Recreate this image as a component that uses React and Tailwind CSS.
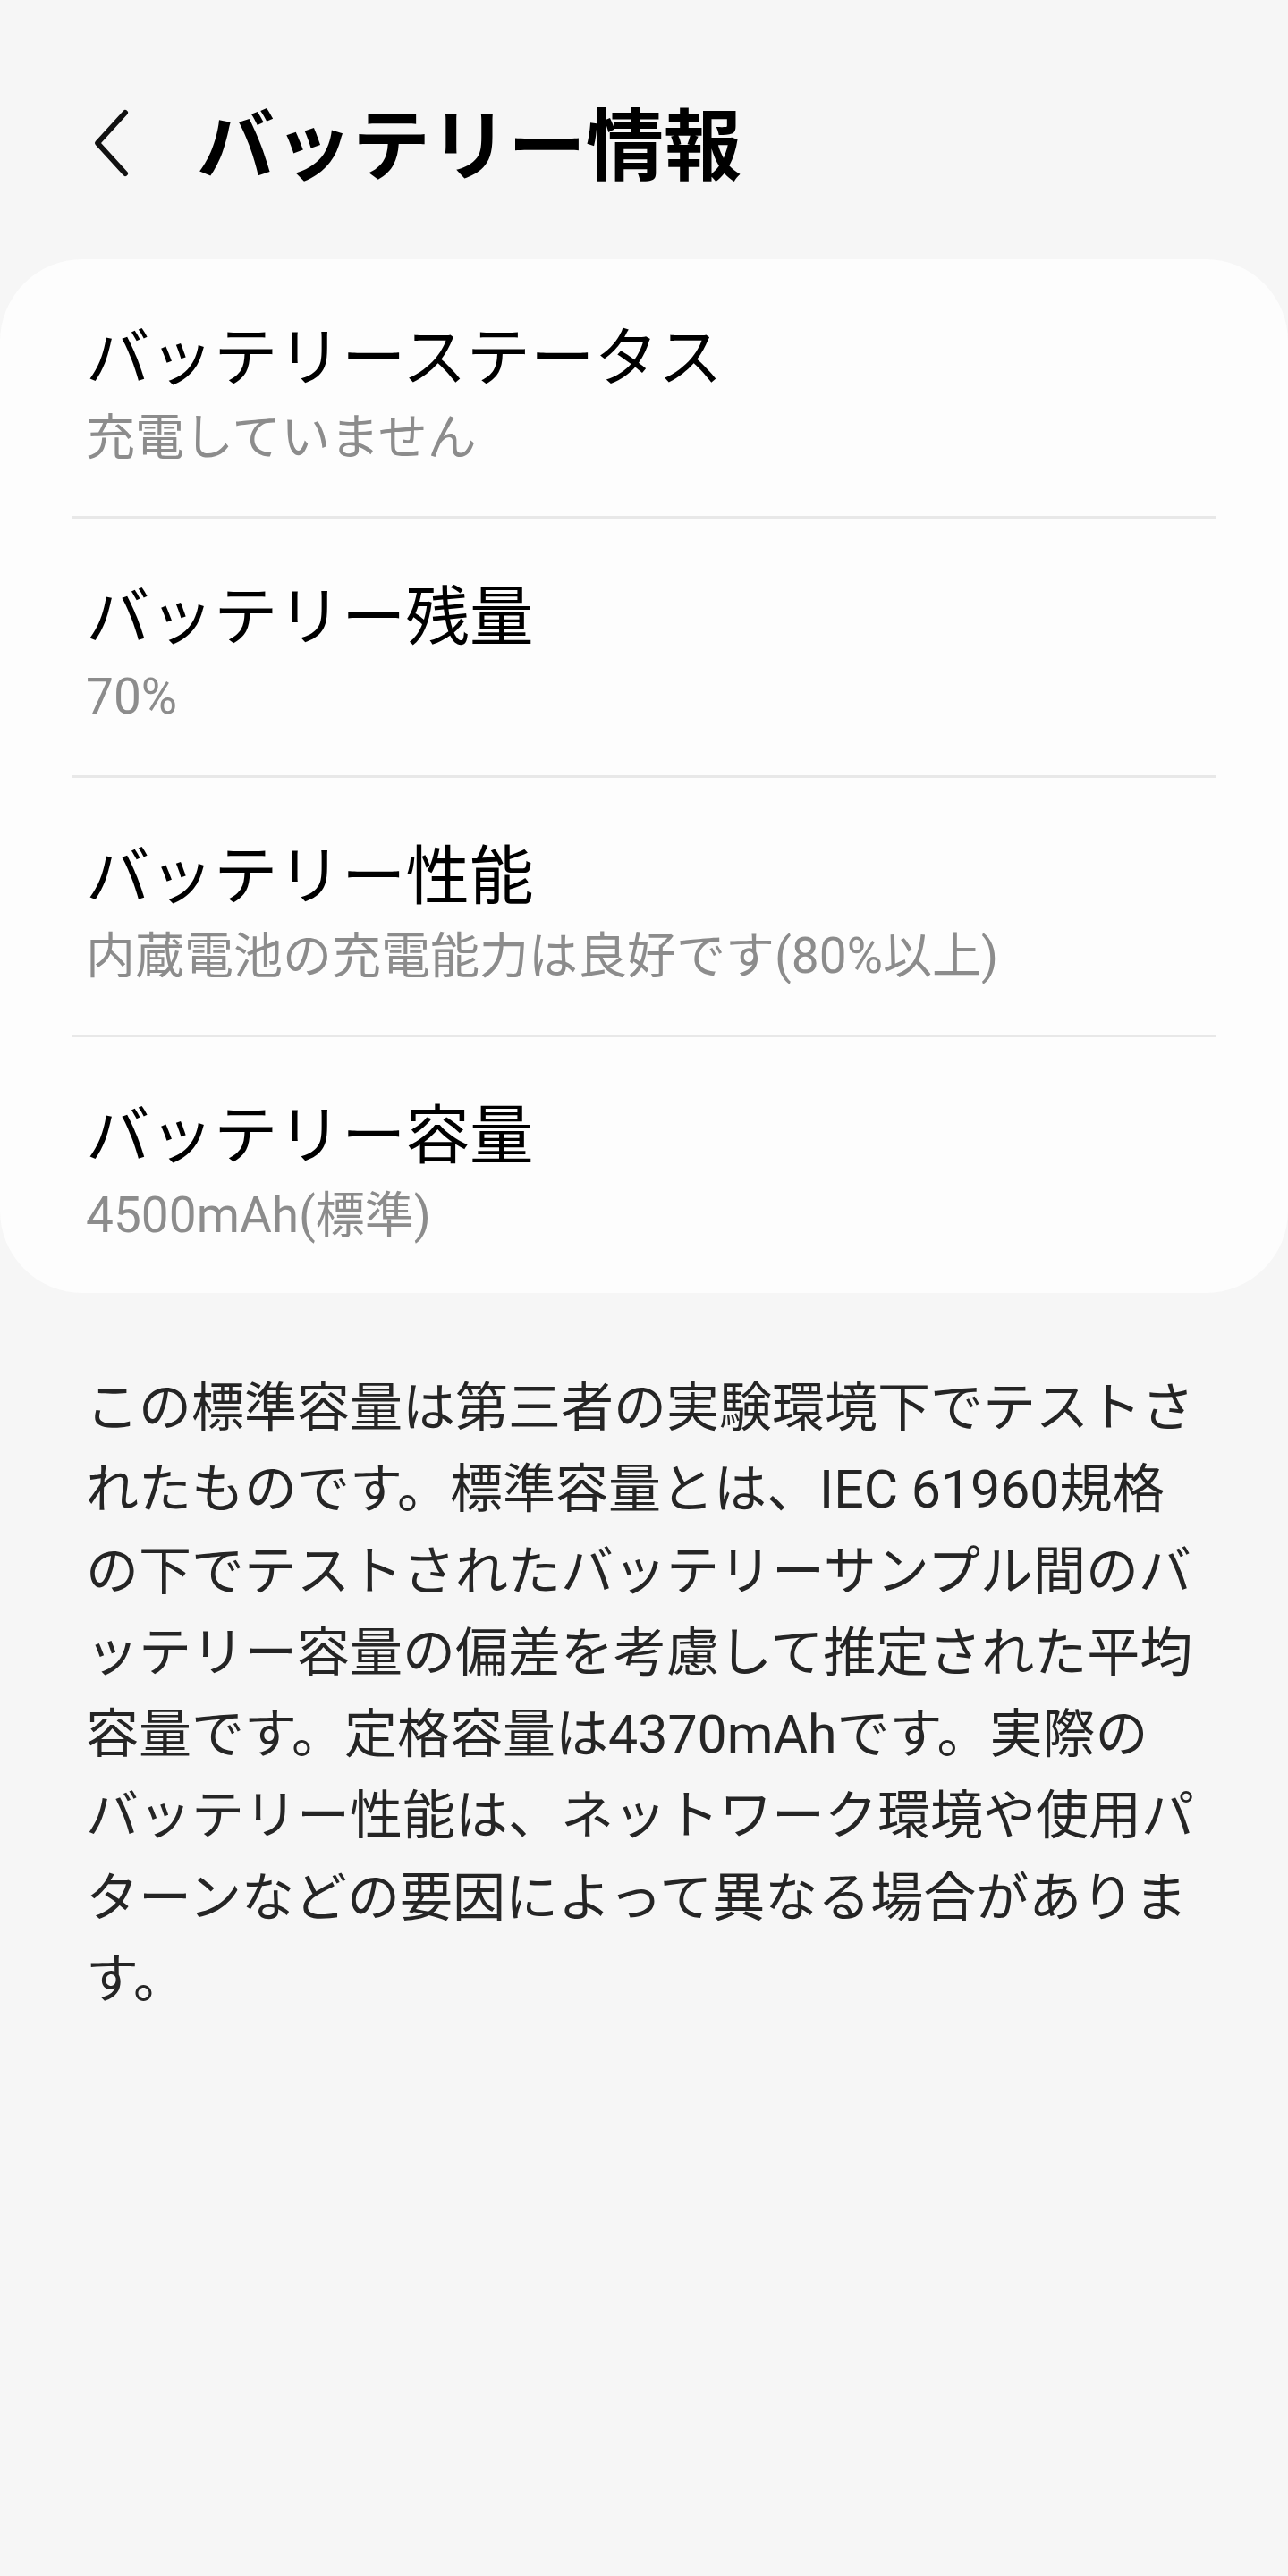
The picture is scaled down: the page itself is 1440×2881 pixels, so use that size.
import React from 'react';

const rows = [
    { title: 'バッテリーステータス', value: '充電していません' },
    { title: 'バッテリー残量', value: '70%' },
    { title: 'バッテリー性能', value: '内蔵電池の充電能力は良好です(80%以上)' },
    { title: 'バッテリー容量', value: '4500mAh(標準)' },
];

const noteLines = [
    'この標準容量は第三者の実験環境下でテストさ',
    'れたものです。標準容量とは、IEC 61960規格',
    'の下でテストされたバッテリーサンプル間のバ',
    'ッテリー容量の偏差を考慮して推定された平均',
    '容量です。定格容量は4370mAhです。実際の',
    'バッテリー性能は、ネットワーク環境や使用パ',
    'ターンなどの要因によって異なる場合がありま',
    'す。',
];

const BatteryInfo = () => {
    return (
        <div className="min-h-[2881px] w-full bg-[#f6f6f6] font-[Roboto,'Noto_Sans_CJK_JP',sans-serif]">
            {/* header */}
            <div className="h-[290px] flex items-start pt-[120px]">
                <svg width="48" height="80" viewBox="0 0 48 80" className="ml-[100px] shrink-0" fill="none">
                    <path d="M40 6 L9 40 L40 74" stroke="#111" strokeWidth="6" strokeLinecap="round" strokeLinejoin="round" />
                </svg>
                <h1 className="ml-[72px] -mt-[5px] text-[87px] leading-[100px] font-bold text-black whitespace-nowrap">
                    バッテリー情報
                </h1>
            </div>

            {/* info card */}
            <div className="bg-[#fdfdfd] rounded-[92px]">
                {rows.map((r, i) => (
                    <div key={r.title}>
                        {i > 0 && <div className="mx-[80px] h-[3px] bg-[#e8e8e8]" />}
                        <div className={`px-[96px] pt-[65px] ${i === rows.length - 1 ? 'pb-[45px]' : 'pb-[46px]'}`}>
                            <div className="text-[71.5px] leading-[92px] text-black whitespace-nowrap">{r.title}</div>
                            <div className="text-[55px] leading-[84px] text-[#8c8c8c] whitespace-nowrap">{r.value}</div>
                        </div>
                    </div>
                ))}
            </div>

            {/* note */}
            <p className="mt-[83px] pl-[96px] pr-[60px] text-[59px] leading-[91.3px] text-[#252525]">
                {noteLines.map((l) => (
                    <span key={l} className="block whitespace-nowrap">{l}</span>
                ))}
            </p>
        </div>
    );
};

export default BatteryInfo;
